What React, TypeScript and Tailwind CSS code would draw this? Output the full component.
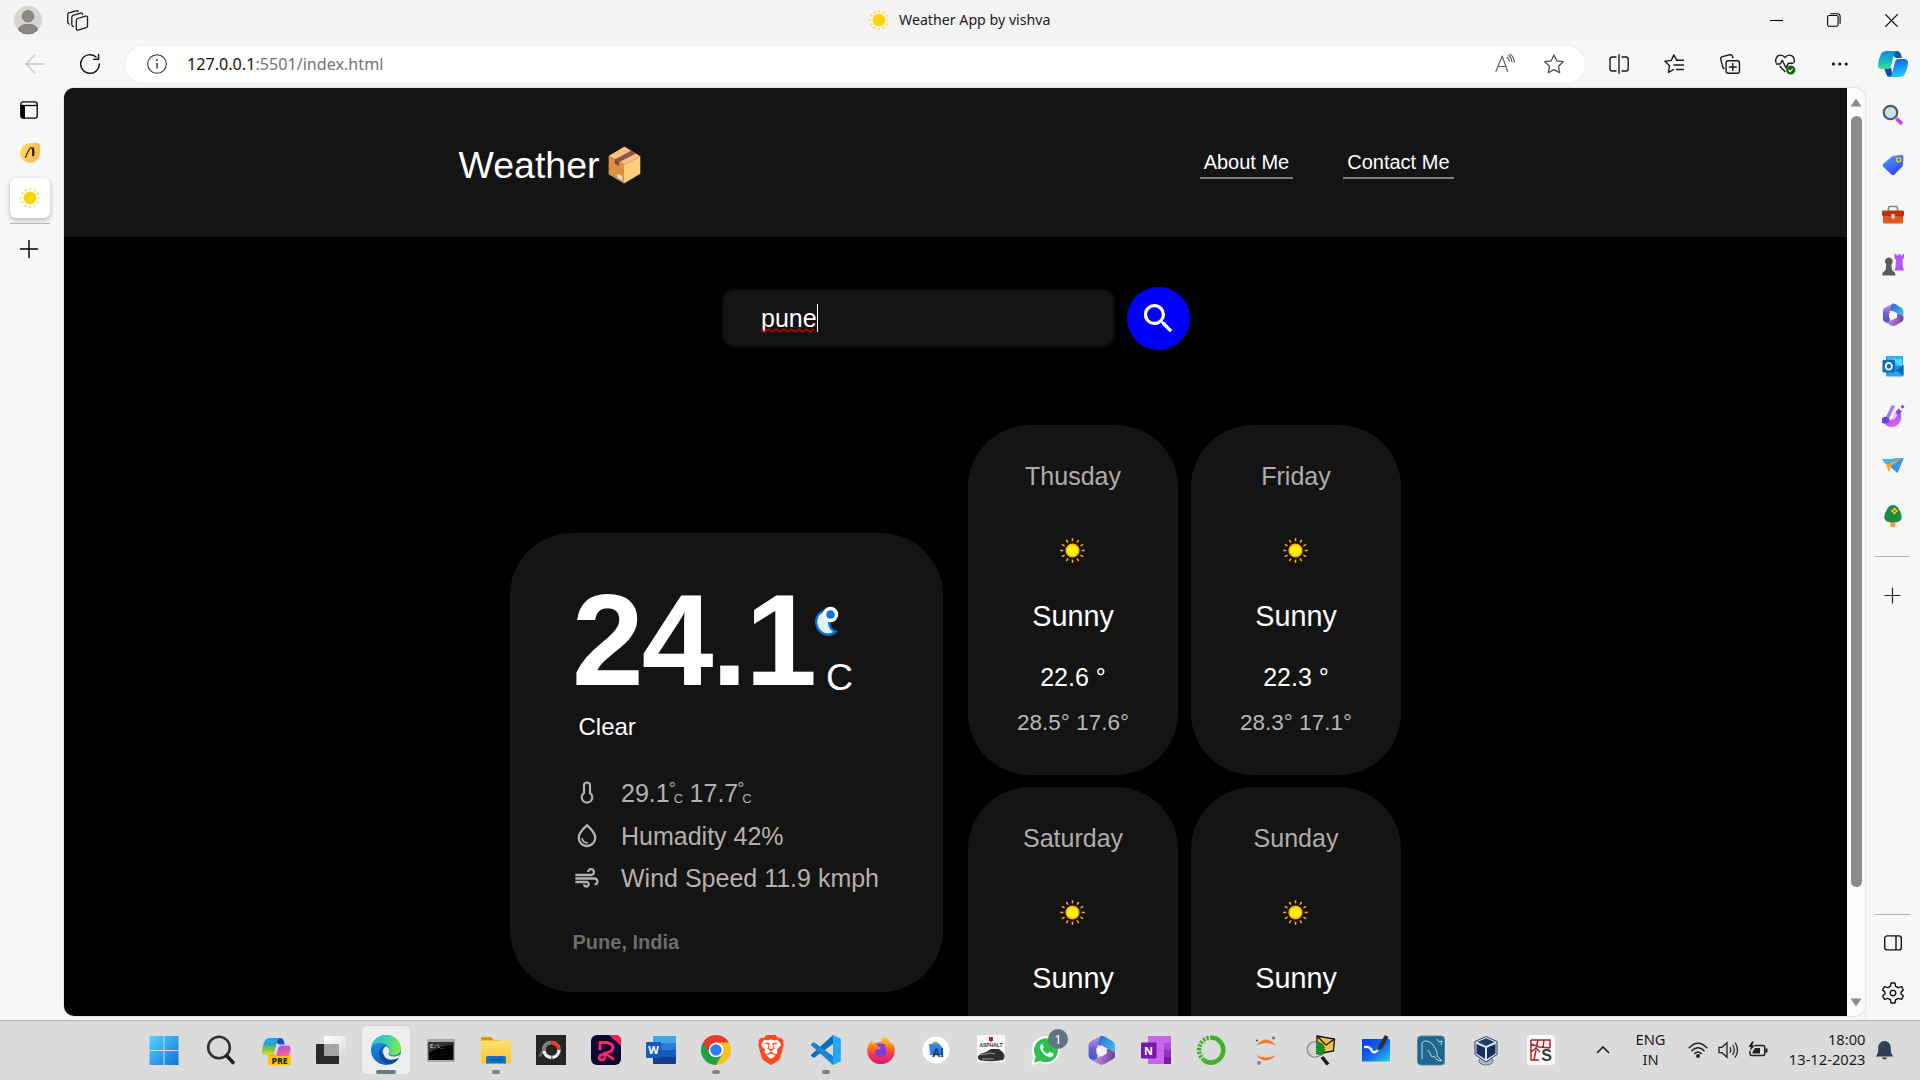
import React from "react";
import { FaFirefoxBrowser } from "react-icons/fa6";
import { MdSearch, MdAir, MdOutlineWaterDrop } from "react-icons/md";
import { SiBrave } from "react-icons/si";

type P = { children: React.ReactNode; s?: number; vb?: string; c?: string };
const Svg = ({ children, s = 30, vb = "0 0 30 30", c = "" }: P) => (
  <svg width={s} height={s} viewBox={vb} fill="none" className={"block shrink-0 overflow-visible " + c}>
    {children}
  </svg>
);
const Grad = ({ id, stops, x2 = 1, y2 = 1 }: { id: string; stops: string[]; x2?: number; y2?: number }) => (
  <linearGradient id={id} x1="0" y1="0" x2={x2} y2={y2}>
    {stops.map((c, i) => (
      <stop key={i} offset={i / (stops.length - 1)} stopColor={c} />
    ))}
  </linearGradient>
);

const Line = ({ d, s = 20, w = 1.3, color = "#1a1a1a" }: { d: string; s?: number; w?: number; color?: string }) => (
  <Svg s={s} vb="0 0 20 20">
    <path d={d} stroke={color} strokeWidth={w} strokeLinecap="round" strokeLinejoin="round" />
  </Svg>
);

/* ---------- small shared drawings ---------- */
const Favicon = () => (
  <Svg s={20} vb="0 0 20 20">
    <circle cx="10" cy="10" r="6.3" fill="#ffd500" />
    <circle cx="10" cy="10" r="8.9" stroke="#ffdf2b" strokeWidth="2" strokeDasharray="1.6 3.06" strokeDashoffset="0.8" />
  </Svg>
);

const Sun = () => (
  <Svg s={25} vb="0 0 24 24">
    <circle cx="12" cy="12" r="6" fill="#fff200" stroke="#fbad18" strokeWidth="1.6" />
    {Array.from({ length: 12 }, (_, i) => (
      <path key={i} d="M12 .2v3" stroke="#fbad18" strokeWidth="1.5" transform={`rotate(${i * 30} 12 12)`} />
    ))}
  </Svg>
);

const PackageBox = () => (
  <svg width="33" height="38" viewBox="0 0 33 38" className="block">
    <path d="M16.5.5 32.3 10.2 16 18.8.6 10z" fill="#f9c27c" />
    <path d="M.6 10 16 18.8V37.5L.6 28.3z" fill="#dd9040" />
    <path d="M16 18.8 32.3 10.2V27.7L16 37.5z" fill="#ffcc7a" />
    <path d="M23.3 4.6 28 7.5 11 16.3 6.8 13.5z" fill="#8d5543" />
    <path d="M6.8 13.5 11 16.3v3.6l-4.2-2z" fill="#7b4638" />
    <path d="m9.3 27.8 5 2.4v4l-5-2.6z" fill="#dfe3e6" />
  </svg>
);

const M365 = ({ s, id }: { s: number; id: string }) => (
  <Svg s={s}>
    <defs>
      <Grad id={id + "a"} stops={["#c791e6", "#6a5fd0", "#3a56c4"]} x2={0} />
      <Grad id={id + "b"} stops={["#2b67c9", "#4ac6f5"]} />
      <Grad id={id + "c"} stops={["#c99af0", "#6e3f93"]} x2={1} y2={0} />
    </defs>
    <path d="M14 1 4 6.5Q2.500 7.500 2.500 9.500V20Q2.500 22.500 4.500 23.500L11 27V10L19 5z" fill={`url(#${id}a)`} />
    <path d="M14 1q2-.8 4 .4l7.500 4.400Q28 7.500 28 10v8l-7 1v-6L11 9.500z" fill={`url(#${id}b)`} />
    <path d="M28 17v3.500q0 2-2 3l-8 4.600q-2.500 1.300-5 .2l-8-4.600q3 1 6-1.200L20 17l.5-4z" fill={`url(#${id}c)`} />
    <path d="m15 10 5 3v5l-5 3-5-3v-5z" fill="#f4f4f6" />
  </Svg>
);

const Copilot = ({ id, warm = false }: { id: string; warm?: boolean }) => (
  <Svg s={30}>
    <defs>
      <Grad id={id + "a"} stops={warm ? ["#1aa8f0", "#2a9fd0", "#7ac943", "#ffd21f"] : ["#1291d8", "#16b1c9", "#3fe08f"]} x2={0} />
      <Grad id={id + "b"} stops={warm ? ["#9a55f0", "#e356b5", "#ff8a5c"] : ["#2a56cf", "#1688ee", "#25c6ff"]} x2={0.3} />
    </defs>
    <path d="M8.500 2H19q3 0 4 3.500L24 9h-6z" fill={warm ? "#1b46c8" : "#145b9c"} />
    <path d="M6 19h7l2 9h-3q-3 0-4-3.500z" fill={warm ? "#f5a31d" : "#1643b8"} />
    <path d="M8.500 2H20q-3 0-4 3.500L13 17q-.8 3-3.500 3H3.500Q0 20-.1 16q.6-6 3.100-11Q4.700 2 8.500 2z" fill={`url(#${id}a)`} />
    <path d="M21.500 28H10q3 0 4-3.500L17 13q.8-3 3.500-3h6q3.500 0 3.600 4-.6 6-3.100 11-1.700 3-5.500 3z" fill={`url(#${id}b)`} />
  </Svg>
);

/* ---------- browser frame ---------- */
const TitleBar = () => (
  <div className="flex h-10 shrink-0 items-center bg-[#f3f3f3] pl-[14px]">
    <Svg s={28} vb="0 0 28 28">
      <circle cx="14" cy="14" r="14" fill="#d6d5d2" />
      <circle cx="14" cy="10.300" r="5.700" fill="#8b8886" stroke="#6f6c6a" strokeWidth=".8" />
      <path d="M4.500 24Q5 18.500 14 18.500T23.500 24Q19.500 28 14 28t-9.500-4z" fill="#8b8886" stroke="#6f6c6a" strokeWidth=".8" />
    </Svg>
    <div className="ml-[25px]">
      <Svg s={21} vb="0 0 21 21">
        <g stroke="#1c1c1c" strokeWidth="1.300" strokeLinejoin="round" strokeLinecap="round">
          <path d="m10.500 8.500 8-2.400q2-.4 2 1.500v8.400q0 1.300-1.300 1.700l-8 2.400q-1.900.4-1.900-1.500v-8.200q0-1.300 1.200-1.900z" />
          <path d="M6.500 16.500q-1.700-.3-1.700-2V7.200q0-1.400 1.300-1.900l7.500-2.200q1.800-.4 2 1.200" />
          <path d="M2.300 14Q.7 13.500.7 12V4.800q0-1.400 1.300-1.900L9.300.8q1.400-.3 1.900.7" />
        </g>
      </Svg>
    </div>
    <div className="ml-[781px] flex items-center gap-[10px]">
      <Favicon />
      <span className="whitespace-nowrap font-['Noto_Sans',sans-serif] text-[14.200px] leading-5 text-[#1b1b1b]">Weather App by vishva</span>
    </div>
    <div className="ml-auto flex items-center gap-[44px] pr-[22px]">
      <svg width="13" height="13" viewBox="0 0 13 13"><path d="M0 6.500h13" stroke="#000" strokeWidth="1.100" /></svg>
      <svg width="14" height="14" viewBox="0 0 14 14" fill="none" stroke="#000" strokeWidth="1.100">
        <rect x=".6" y="2.500" width="10.500" height="10.800" rx="1.500" />
        <path d="M3.300.8h7.200q2.600 0 2.600 2.500v7.500" />
      </svg>
      <svg width="13" height="13" viewBox="0 0 13 13"><path d="m.3.300 12.400 12.400M12.700.3.300 12.700" stroke="#000" strokeWidth="1.200" /></svg>
    </div>
  </div>
);

const Toolbar = () => (
  <div className="flex h-12 shrink-0 items-center bg-[#f7f7f7]">
    <div className="flex w-[125px] items-center gap-[35px] pl-[25px]">
      <Line d="M19.500 10H.8M9.500 1.500.8 10l8.700 8.500" color="#c6c6c6" />
      <Line d="M19.300 10a9.300 9.300 0 1 1-3.200-7M18.600.5v4.700h-4.800" w={1.5} />
    </div>
    <div className="flex h-[37px] w-[1460px] items-center rounded-full bg-white pl-[22px] pr-[21px] shadow-[0_0_3px_rgba(0,0,0,0.08)]">
      <Svg s={20} vb="0 0 20 20">
        <circle cx="10" cy="10" r="9.300" stroke="#333" strokeWidth="1.100" />
        <path d="M10 9v5.500" stroke="#333" strokeWidth="1.400" />
        <circle cx="10" cy="6" r="1" fill="#333" />
      </Svg>
      <span className="ml-[20px] whitespace-nowrap font-['Noto_Sans',sans-serif] text-[16.150px] leading-6 text-[#111]">
        127.0.0.1<span className="text-[#747474]">:5501/index.html</span>
      </span>
      <div className="ml-auto flex items-center gap-[29px]">
        <Line d="m.8 17.500 6.400-15.500 5.500 15.500M3 12.500h8M12 3.300q2.300 1.300 2.300 4M13.500 1.500q3.300 2 3.300 6.300M15.200.2q4 2.800 4 8" w={1.1} color="#5a5a5a" />
        <Line d="m10 .9 2.800 5.900 6.400.9-4.700 4.500 1.200 6.500L10 15.600l-5.700 3.100 1.200-6.500L.8 7.700l6.400-.9z" w={1.2} color="#4a4a4a" />
      </div>
    </div>
    <div className="ml-[24px] flex items-center gap-[35.300px]">
      <Line d="M7 3H3.200Q1 3 1 5.200v9.600Q1 17 3.200 17H7M13 3h4Q19.200 3 19.200 5.200v9.600Q19.200 17 17 17h-4M10 .8v18.400" w={1.4} />
      <Line d="M13.500 6 12.600 6.400 9.900.9 7.200 6.400.9 7.300l4.700 4.400-1.200 6.600 5-2.700M12.500 6.200h7M10 11h9.500M12.500 15.500h7" w={1.4} />
      <Line d="M8.300 6.800h9q2.200 0 2.200 2.200v8q0 2.200-2.200 2.200h-9q-2.200 0-2.200-2.200V9q0-2.200 2.200-2.200zM12.800 9.500v7M9.300 13h7M4 14.500q-1-.4-1.400-1.800L.8 5.300Q.4 3.300 2.300 2.600L9.800.8q2-.3 2.700 1.500l.4 1.500" w={1.4} />
      <Svg s={20} vb="0 0 20 20">
        <g stroke="#1c1c1c" strokeWidth="1.400" strokeLinecap="round" strokeLinejoin="round">
          <path d="M1 8.500Q-.3 4 3 1.800 7-.2 10 3.500q3-3.700 7-1.700 3.300 2.200 2 6.700M5 12.500l5 5" />
          <path d="M1.500 10h3.800l2-3.700 3.600 7.500 2.400-4.500h4.500" />
        </g>
        <circle cx="15.700" cy="16" r="4.600" fill="#0b6a0b" />
        <path d="m13.600 16 1.500 1.600 2.700-3" stroke="#fff" strokeWidth="1.100" />
      </Svg>
      <Svg s={20} vb="0 0 20 20">
        <g fill="#111"><circle cx="3.500" cy="10" r="1.600" /><circle cx="9.800" cy="10" r="1.600" /><circle cx="16.200" cy="10" r="1.600" /></g>
      </Svg>
    </div>
    <div className="ml-auto pr-[12px]"><Copilot id="cs" /></div>
  </div>
);

const TabStrip = () => (
  <div className="flex w-16 shrink-0 flex-col items-center bg-[#f7f7f7] pr-[4px] pt-[13px]">
    <Svg s={18} vb="0 0 18 18" c="mr-[2px]">
      <rect x=".8" y=".8" width="16.400" height="16.400" rx="2.500" stroke="#000" strokeWidth="1.300" />
      <path d="M1 4.500h16" stroke="#000" strokeWidth="1.300" />
      <path d="M1 4.500h4V17H3q-2 0-2-2z" fill="#000" />
    </Svg>
    <div className="mt-[24px]">
      <Svg s={20} vb="0 0 20 20">
        <defs><Grad id="ft" stops={["#fde063", "#fdb95a"]} y2={0.3} /></defs>
        <path d="M10 0h7q3 0 3 3v7A10 10 0 1 1 10 0z" fill="url(#ft)" />
        <path d="M5.500 14.500Q7 10 9.500 6q2-2.800 3 .500.500 3 0 6M13 4.500q1.500 3 .5 8.500" stroke="#2a2412" strokeWidth="1.200" strokeLinecap="round" />
      </Svg>
    </div>
    <div className="mt-[15px] flex size-10 items-center justify-center rounded-md bg-white shadow-[0_2px_5px_rgba(0,0,0,0.28)]"><Favicon /></div>
    <div className="mt-[5px] h-px w-10 bg-[#b5b5b5]" />
    <div className="mr-[2px] mt-[16px]"><Line s={18} d="M10 .5v19M.5 10h19" w={1.6} color="#000" /></div>
  </div>
);

const sideIcons: React.ReactNode[] = [
  <Svg key="s" s={22} vb="0 0 22 22">
    <path d="m14.500 14.500 5.500 5.500" stroke="#c63cf0" strokeWidth="3.600" />
    <circle cx="8.500" cy="8.500" r="6.700" fill="#c4e2f7" stroke="#5a5a5c" strokeWidth="2.300" />
  </Svg>,
  <Svg key="t" s={22} vb="0 0 22 22">
    <defs><Grad id="tg" stops={["#5ca2ff", "#2f49f2"]} x2={0.4} /></defs>
    <path d="M10.500 2 19.500.8q2 0 2 2L20.800 12l-8.300 8.500q-1.600 1.200-3 0L1.200 12.800q-1.200-1.500 0-3z" fill="url(#tg)" />
    <circle cx="16.700" cy="5.800" r="2" fill="#6d6a10" stroke="#ffdd12" strokeWidth="1.300" />
  </Svg>,
  <Svg key="b" s={22} vb="0 0 22 22">
    <path d="M6.500 7V4q0-1.500 1.500-1.500h6q1.500 0 1.500 1.500v3" stroke="#8a8a8a" strokeWidth="1.700" />
    <rect x="1" y="9" width="20" height="10.500" rx="1.500" fill="#e2571c" />
    <rect x="0" y="6.500" width="22" height="5.500" rx="1.200" fill="#b93306" />
    <rect x="9.300" y="10" width="3.600" height="4.500" rx="1" fill="#d8d2cc" />
  </Svg>,
  <Svg key="c" s={22} vb="0 0 22 22">
    <path d="M12.500 0h2v1.500h2V0h2v1.500h2V0H22v4l-1.500 2 .5 8 1.500 2.500H12l1.500-2.500.5-8-1.500-2z" fill="#b455f5" />
    <path d="M6.800 3.500a4 4 0 0 1 2.600 7l.6 5.500 3.200 3v2.500H.4V19l3.200-3 .6-5.500a4 4 0 0 1 2.600-7z" fill="#5c5a5c" />
  </Svg>,
  <M365 key="m" s={24} id="ms" />,
  <Svg key="o" s={22} vb="0 0 22 22">
    <rect x="4" y="1" width="17" height="19" rx="1.300" fill="#1490df" />
    <path d="M5 1h15.500v10H5z" fill="#36b5f2" /><path d="M12 4h8v7l-7-3z" fill="#50d9ff" />
    <path d="M21.500 10v10.500q0 1-1 1H5q-1 0-1-1V19z" fill="#28a8ea" /><path d="m21.500 10-8 5.500 8 5z" fill="#1066b5" />
    <rect x=".5" y="5" width="12.500" height="12.500" rx="1.200" fill="#0f6cbd" />
    <ellipse cx="6.800" cy="11.200" rx="3.100" ry="3.400" stroke="#fff" strokeWidth="1.800" />
  </Svg>,
  <Svg key="d" s={24} vb="0 0 24 24">
    <defs><Grad id="dg" stops={["#8b58e8", "#e05cf4"]} x2={0.4} /></defs>
    <path d="M3 15q4 3 8 .5Q14 13 15 8l5 2q1.500 7-4 11.500-4.500 2.700-9.500.7Q3 20 3 15z" fill="url(#dg)" />
    <path d="M12.500 8q4.500 1 3 4.500-1.300 2.700-4.500 3z" fill="#f0c8fb" />
    <path d="m11 1 3 1-6 13-3.500-1.500z" fill="#a678f5" />
    <path d="M1 14.500q2-3 5.500-1.200 3.500 2.500 1 5Q4.500 20.500 1 19z" fill="#5b4ad6" />
    <path d="m17.500 4.500 3.500 3-3 3.500-3.500-3zM21.500.8 23.500 2.800l-2 2-2-2z" fill="#7a4be6" />
  </Svg>,
  <Svg key="p" s={22} vb="0 0 22 22">
    <path d="M0 4.500 21.500 3l-6 15z" fill="#1f8ae6" /><path d="M0 4.500 21.500 3 4 9.500z" fill="#42b5f5" />
    <path d="M4 9.500 21.500 3 9 11l-2 6.500z" fill="#f5a81c" /><path d="M21.500 3 9 11.500 15.500 18z" fill="#3399f0" />
  </Svg>,
  <Svg key="r" s={22} vb="0 0 22 22">
    <rect x="8.300" y="15" width="5" height="7" rx="1" fill="#f0a030" />
    <path d="M11 0q4 0 6 4.500 3.500 5 2.500 9-1 4-8.500 4t-8.500-4q-1-4 2.500-9Q7 0 11 0z" fill="#1f8a44" />
    <path d="M12.500 4v4M10.500 6h4" stroke="#ffd21e" strokeWidth="2.600" strokeLinecap="round" /><circle cx="12.500" cy="6" r="1.200" fill="#e8481c" />
  </Svg>,
];

const SideBar = () => (
  <div className="flex w-[55px] shrink-0 flex-col items-center border-l border-[#e9e9e9] bg-[#f7f7f7] pb-[16px] pr-[1px]">
    <div className="h-[2px]" />
    {sideIcons.map((ic, i) => (
      <div key={i} className="flex h-[50.100px] w-10 items-center justify-center">{ic}</div>
    ))}
    <div className="mt-[15px] h-px w-[35px] bg-[#b3b3b3]" />
    <div className="mt-[31px]"><Line s={15} d="M10 0v20M0 10h20" w={1.6} color="#222" /></div>
    <div className="mt-auto h-px w-[35px] bg-[#b3b3b3]" />
    <div className="mt-[20px]">
      <svg width="18" height="16" viewBox="0 0 18 16" fill="none" stroke="#111" strokeWidth="1.400" className="block">
        <rect x=".7" y=".9" width="16.600" height="14" rx="2.500" /><path d="M12 1v14" />
      </svg>
    </div>
    <div className="mt-[31px]">
      <Svg s={22} vb="-11 -11 22 22">
        <path d="M-1.900-10H1.900L2.700-6.700 5.200-5.300 8.500-6.300 10.400-3 8-.900V.9L10.400 3 8.500 6.300 5.200 5.300 2.700 6.700 1.900 10H-1.900L-2.700 6.700-5.200 5.300-8.500 6.300-10.400 3-8 .9V-.9L-10.400-3-8.500-6.300-5.200-5.300-2.700-6.700z" stroke="#111" strokeWidth="1.400" strokeLinejoin="round" />
        <circle r="2.800" stroke="#111" strokeWidth="1.400" />
      </Svg>
    </div>
  </div>
);

const ScrollBar = () => (
  <div className="flex w-[18px] shrink-0 flex-col items-center bg-[#fcfcfc] pb-[9px] pt-[10px]">
    <svg width="12" height="9" viewBox="0 0 12 9" className="block"><path d="M6 .5 11.500 8.500H.5z" fill="#8b8b8b" /></svg>
    <div className="mt-[9px] h-[771px] w-[11px] rounded-full bg-[#8b8b8b]" />
    <svg width="12" height="9" viewBox="0 0 12 9" className="mt-auto block"><path d="M6 8.500 11.500.5H.5z" fill="#8b8b8b" /></svg>
  </div>
);

/* ---------- weather page ---------- */
const Row = ({ icon, children }: { icon: React.ReactNode; children: React.ReactNode }) => (
  <div className="flex h-[42.500px] items-center text-[25px] text-[#b4b0ae]">
    <div className="flex w-[28px] justify-center">{icon}</div>
    <div className="ml-[20px] flex whitespace-nowrap leading-[42.500px]">{children}</div>
  </div>
);

const MiniUnit = () => (
  <span className="-ml-[1px] flex h-[42px] w-[14px]">
    <span className="mt-[1px] w-[5px] text-[17.500px] leading-[32px]">°</span>
    <span className="mt-[20px] text-[13px] leading-[14px]">C</span>
  </span>
);

const Current = () => (
  <div className="mt-[108px] h-[459px] w-[433px] shrink-0 rounded-[62px] bg-[#141414] pl-[61px] pt-[46px]">
    <div className="flex h-[125px]">
      <span className="-mt-[1px] ml-[1px] w-[243px] text-[129px] font-bold leading-[125px] tracking-[-2px] text-white">24.1</span>
      <div className="flex flex-col">
        <svg width="25" height="30" viewBox="0 0 25 30" fill="none" className="mt-[27px] block">
          <path d="M9.500 4.500Q.5 8 1.200 17.500 3.500 28 13 28.700q4.500 0 7.500-3-7.500-3-6-12z" fill="#dff3ff" stroke="#0b6fdc" strokeWidth="2.400" />
          <circle cx="15.500" cy="8.500" r="6" fill="#0b6fdc" stroke="#fff" strokeWidth="3.500" />
        </svg>
        <span className="ml-[11px] mt-[20px] text-[37.500px] leading-[42px] text-white">C</span>
      </div>
    </div>
    <div className="ml-[7.500px] mt-[8px] text-[24px] leading-[30px] text-white">Clear</div>
    <div className="mt-[30px] flex flex-col pl-[2px]">
      <Row icon={<Svg s={24} vb="0 0 24 24"><path d="M9 12V4.500a3 3 0 0 1 6 0V12a5.300 5.300 0 1 1-6 0z" stroke="#b4b0ae" strokeWidth="2.200" /></Svg>}>
        29.1<MiniUnit />&nbsp;17.7<MiniUnit />
      </Row>
      <Row icon={<MdOutlineWaterDrop size={31} />}>Humadity 42%</Row>
      <Row icon={<MdAir size={31} />}>Wind Speed 11.9 kmph</Row>
    </div>
    <div className="ml-[1.500px] mt-[29px] text-[20px] font-bold leading-[26px] text-[#6d6d6d]">Pune, India</div>
  </div>
);

const days: { name: string; temp?: string; range?: string }[] = [
  { name: "Thusday", temp: "22.6 °", range: "28.5° 17.6°" },
  { name: "Friday", temp: "22.3 °", range: "28.3° 17.1°" },
  { name: "Saturday" },
  { name: "Sunday" },
];

const Day = ({ d }: { d: (typeof days)[number] }) => (
  <div className="flex h-[350px] flex-col items-center whitespace-nowrap rounded-[62px] bg-[#141414] pt-[36px]">
    <div className="text-[25px] leading-[30px] text-[#b0acab]">{d.name}</div>
    <div className="mt-[47px] pr-[1px]"><Sun /></div>
    <div className="mt-[36px] text-[28.750px] leading-[34px] text-white">Sunny</div>
    {d.temp && <div className="mt-[29px] text-[25px] leading-[30px] text-white">{d.temp}</div>}
    {d.range && <div className="mt-[16.500px] text-[22.500px] leading-[27px] text-[#b8b8b8]">{d.range}</div>}
  </div>
);

const WeatherPage = () => (
  <div className="min-w-0 flex-1 overflow-hidden bg-black font-['Liberation_Sans',Arial,sans-serif]">
    <header className="flex h-[149px] justify-center bg-[#141414]">
      <div className="flex w-[996px] items-start justify-between">
        <div className="flex items-center gap-[8px] pl-[1px] pt-[55px]">
          <span className="text-[37.500px] leading-[44px] text-white">Weather</span>
          <PackageBox />
        </div>
        <nav className="flex gap-[50px] pt-[61px] text-[20px] leading-[27px] text-white">
          <span className="border-b-2 border-[#7d7d7d] px-[4px] pb-[1px]">About Me</span>
          <span className="border-b-2 border-[#7d7d7d] px-[4px] pb-[1px]">Contact Me</span>
        </nav>
      </div>
    </header>
    <div className="mt-[50px] flex h-[63px] items-start justify-center gap-[12px]">
      <div className="mt-[2px] flex h-[58px] w-[393px] items-center rounded-xl border-2 border-[#0c0c14] bg-[#141414] pl-[37.500px]">
        <div className="relative border-r border-white text-[25px] leading-[28px] text-white">
          pune
          <svg width="54" height="5" viewBox="0 0 54 5" fill="none" className="absolute left-[0px] top-[24px]">
            <path d={"M0 1" + Array.from({ length: 7 }, () => "l3.800 3 3.800-3").join("")} stroke="#e00000" strokeWidth="1.300" />
          </svg>
        </div>
      </div>
      <div className="flex size-[63px] items-center justify-center rounded-full bg-[#0000ff] text-white"><MdSearch size={39} /></div>
    </div>
    <div className="mt-[75px] flex justify-center gap-[25px]">
      <Current />
      <div className="grid w-[433px] grid-cols-[210px_210px] content-start gap-x-[13px] gap-y-[12.400px]">
        {days.map((d) => <Day key={d.name} d={d} />)}
      </div>
    </div>
  </div>
);

/* ---------- taskbar ---------- */
const apps: { icon: React.ReactNode; run?: boolean; active?: boolean; badge?: boolean }[] = [
  { icon: <Svg><defs><Grad id="wg" stops={["#57d3fd", "#0a74d6"]} /></defs><path d="M.5 1h14v14H.5zM15.500 1h14v14h-14zM.5 16h14v14H.5zM15.500 16h14v14h-14z" fill="url(#wg)" /></Svg> },
  { icon: <Svg><circle cx="13" cy="12.500" r="10.800" stroke="#333" strokeWidth="2.600" /><path d="m20.500 20.500 6.500 7" stroke="#222" strokeWidth="3.600" strokeLinecap="round" /></Svg> },
  { icon: <Svg><g transform="translate(1 1) scale(.95)"><Copilot id="ct" warm /></g><rect x="7" y="21" width="23" height="9.500" rx="2" fill="#ffc700" /><text x="18.500" y="29" textAnchor="middle" fontSize="8.800" fontWeight="800" fill="#222" fontFamily="Noto Sans">PRE</text></Svg> },
  { icon: <Svg><defs><Grad id="tv" stops={["#ffffff", "#dadada"]} /></defs><rect x="0" y="9" width="23" height="20" rx="1" fill="#2b2b2b" /><rect x="8" y="1" width="22" height="20" rx="1" fill="url(#tv)" /><path d="M8 9h15v12H8z" fill="#a5a5a5" /></Svg> },
  { active: true, icon: <Svg><defs><Grad id="eg" stops={["#2bb6e6", "#39d2b0", "#76e850"]} y2={0.2} /><Grad id="eg2" stops={["#1a9be8", "#0f62c4"]} x2={0.3} /></defs>
    <circle cx="15" cy="15" r="15" fill="url(#eg2)" />
    <path d="M.2 13A15 15 0 0 1 30 13.500q0 5-5 6.700-5 1-7.300-1 2-2.500.8-5.700Q16.500 8.500 10 8 2.500 8 .2 13z" fill="url(#eg)" />
    <path d="M10.500 17Q11 12 15 10.500q-7 .5-7 8.500 1.500 9.500 11 10.500 6-1.500 9-6.800-5 2.300-10 .8-6-2-7.500-6.500z" fill="#0c4f9e" />
    <path d="M12.300 18.500q-1.500-5 3-7.300 3.500 1.800 3.200 5.300-.3 1.500-1.300 2.500 1.500 3.300 7.800 2.300l4-1.500-1 3q-10 4-14-.5z" fill="#ececec" />
  </Svg> },
  { icon: <Svg><rect x="1" y="4" width="28" height="23" rx="1" fill="#a5a9b0" /><rect x="2.500" y="7" width="25" height="18" fill="#050505" /><path d="M2.500 7h25v3Q15 10 2.500 18z" fill="#333" /><text x="4" y="13" fontSize="5.500" fontWeight="700" fill="#ddd" fontFamily="Liberation Mono">C:\_</text></Svg> },
  { run: true, icon: <Svg><defs><Grad id="fe" stops={["#ffdf70", "#ffc329"]} x2={0} /></defs><path d="M0 3q0-1 1-1h9l3 3h5v6H0z" fill="#dc9500" /><rect x="0" y="5.500" width="30" height="23" rx="1" fill="url(#fe)" /><path d="M5 28.500V23q0-2 2-2h16q2 0 2 2v5.500z" fill="#1271c4" /><path d="M9 24.700h13" stroke="#0a4b92" strokeWidth="1.300" /></Svg> },
  { icon: <Svg><path d="M0 0h30v30H0z" fill="#252525" /><path d="M12.500 7.500a8 8 0 0 0-5 7.500l-4 6.500" stroke="#5f5f5f" strokeWidth="3" /><circle cx="15.500" cy="15" r="7.500" stroke="#f4f4f4" strokeWidth="3.400" strokeDasharray="10.800 .98" /><path d="M15.500 7.500a7.500 7.500 0 0 1 7.500 7" stroke="#f03224" strokeWidth="3.400" /><path d="M8 15a7.500 7.500 0 0 1 7-7.500" stroke="#7a7a7a" strokeWidth="3.400" /></Svg> },
  { icon: <Svg><rect width="30" height="30" rx="6" fill="#0c0433" /><path d="M18 0h7q5 0 5 5v6z" fill="#f6204f" /><path d="M9 14V7.500h6q7 1 7 5 0 3-4 4.500L9 20.500q-2 4.500 2 4.500 4 0 3-7l8 6" stroke="#ff2568" strokeWidth="2.800" strokeLinejoin="round" strokeLinecap="round" /></Svg> },
  { icon: <Svg><path d="M8 1h21q1 0 1 1v6.500H7V2q0-1 1-1z" fill="#41a5ee" /><path d="M7 8h23v7H7z" fill="#2b7cd3" /><path d="M7 15h23v7H7z" fill="#185abd" /><path d="M7 22h23v6q0 1-1 1H8q-1 0-1-1z" fill="#103f91" /><rect x="0" y="7" width="15" height="16" rx="1" fill="#185abd" /><text x="7.500" y="19" textAnchor="middle" fontSize="11" fontWeight="700" fill="#fff" fontFamily="Open Sans">W</text></Svg> },
  { run: true, icon: <Svg><circle cx="15" cy="15" r="15" fill="#fcc21b" /><path d="M15 15 2 7.500A15 15 0 0 0 15 30l6.500-11.300z" fill="#1fa34a" /><path d="M28 7.500A15 15 0 0 0 2 7.500L8.500 18.700 15 7.500z" fill="#e33b2e" /><circle cx="15" cy="15" r="7.300" fill="#fff" /><circle cx="15" cy="15" r="5.700" fill="#2d7df0" /></Svg> },
  { icon: <Svg><path d="m8 3 14 0 5 6-4 15-8 6-8-6L3 9z" fill="#fff" /><SiBrave x={0} y={0} size={30} color="#fb4b1c" /></Svg> },
  { run: true, icon: <Svg><path d="M22 0v9L3.500 22.500q-1 .7-1.800 0L.3 21q-.7-.8 0-1.600z" fill="#0a6fb8" /><path d="M22 30v-9L3.500 7.500q-1-.7-1.800 0L.3 9q-.7.8 0 1.600z" fill="#1789d0" /><path d="m22 0 7 3.200q.8.500.8 1.300v21q0 .8-.8 1.300L22 30q-1 0-1.500-1 1.500.5 1.500-1V2q0-1.500-1.500-1 .5-1 1.500-1z" fill="#27a7f3" /></Svg> },
  { icon: <Svg><defs><Grad id="ff" stops={["#ffd93b", "#ff8a16", "#f8304e", "#d21c8e"]} x2={0} /></defs><circle cx="15" cy="16" r="9" fill="#7a3fe0" /><FaFirefoxBrowser size={29} x={0.500} y={0.500} fill="url(#ff)" /></Svg> },
  { icon: <Svg><circle cx="15" cy="15" r="13.500" fill="#fff" /><path d="M8 9h10l3 3v8H9z" fill="#3a7df0" /><path d="M10 9.500q4-5.500 9 0z" fill="#33c36b" /><text x="17" y="22" textAnchor="middle" fontSize="12" fontWeight="700" fill="#123c5c" fontFamily="Roboto">AI</text></Svg> },
  { icon: <Svg><path d="M1 0h28v27H1z" fill="#f8f8f8" /><path d="M13 2h4v3.500l-2 1.500-2-1.500z" fill="#a32b3c" /><text x="15" y="12" textAnchor="middle" fontSize="5" fontWeight="700" textLength="23" fill="#333" fontFamily="Liberation Sans">ASPHALT</text><path d="M2 21q3-3 8-4l5-3h8l4 3.500q2 2 1.500 5L27 25q-10 2-22 .5-4-1.500-3-4.500z" fill="#2e2e30" /><path d="m5 20 9-2 5 1M6 24h12" stroke="#9a9a9a" /></Svg> },
  { badge: true, icon: <Svg><path d="M0 30 2.500 22A14 14 0 1 1 9 28z" fill="#fff" /><path d="M3 27.500 4.700 21.500A12 12 0 1 1 9.500 26z" fill="#2fc04e" /><path d="M11 8.500q-4 3 .5 9 6 7 10.500 3.500l.7-2.300-4-2-2 2q-4-1-5-5l1.300-1.500z" fill="#fff" /></Svg> },
  { icon: <M365 s={31} id="mt" /> },
  { icon: <Svg><path d="M7 1h22q1 0 1 1v27H7z" fill="#ca64ea" /><path d="M23 8h7v7h-7z" fill="#ae4bd5" /><path d="M23 15h7v7h-7z" fill="#9332bf" /><path d="M23 22h7v7h-7z" fill="#7719aa" /><rect x="0" y="7.500" width="15.500" height="16" rx="1" fill="#7719aa" /><text x="7.500" y="19.500" textAnchor="middle" fontSize="11" fontWeight="700" fill="#fff" fontFamily="Open Sans">N</text></Svg> },
  { icon: <Svg><path d="M15 2.500a12.500 12.500 0 1 1-7 23" stroke="#43b02a" strokeWidth="4.600" /><path d="M8 25A12.500 12.500 0 0 1 15 2.500" stroke="#43b02a" strokeWidth="4.400" strokeDasharray="2.400 1.300" /></Svg> },
  { icon: <Svg><path d="M5 10.500q10-12 20 0-10-5-20 0zM5 20q10 11 20 0-10 5-20 0z" fill="#f37726" /><circle cx="22.500" cy="3" r="1.600" fill="#767677" /><circle cx="6" cy="5.500" r="1.100" fill="#555" /><circle cx="8" cy="28" r="2" fill="#8a8a8b" /></Svg> },
  { icon: <Svg><path d="m11 1 17.500 3-1 12L11 19z" fill="#f0bf52" stroke="#111" strokeWidth="1.300" /><path d="m11 1 9 9 8.500-6" stroke="#111" strokeWidth="1.300" /><circle cx="9" cy="14.500" r="7.800" fill="#d4d5d2" stroke="#8c8c8c" strokeWidth="1.300" /><path d="M10.500 7q8 0 8 8 0 4-3 5l-5-1z" fill="#12961c" stroke="#041" strokeDasharray="1 1" /><path d="m16 22 6 7.500" stroke="#1a1a1a" strokeWidth="3.600" /></Svg> },
  { icon: <Svg><defs><Grad id="wb" stops={["#0b32f5", "#0f63ea", "#24cfe0"]} /></defs><rect x="1" y="4" width="28" height="22.500" rx="1" fill="url(#wb)" /><path d="M4 12q5-1 7 4 2 3 6-1" stroke="#fff" strokeWidth="2.300" strokeLinecap="round" /><path d="m16 16 2-6 6-10 3.500 2-6 11z" fill="#2e2e33" /></Svg> },
  { icon: <Svg><rect x="1.500" y="1" width="27" height="29" rx="3.500" fill="#20678f" stroke="#4c8aa9" /><path d="M6 24V11q-1-5 4-5 6 0 10 9 2 4 1 6l5 5-5-1-3-4-2 1-4-7M21 4l2 3 3-1-1 4" stroke="#b9d9e8" strokeWidth="1" strokeLinejoin="round" /></Svg> },
  { icon: <Svg><ellipse cx="15" cy="26" rx="7" ry="4" fill="#aeb5c3" stroke="#5f6e88" /><path d="M15 1.500 26 6.500v13L15 27 4 19.500v-13z" fill="#d9e3ee" stroke="#24406a" /><path d="m15 3.200 8.500 3.900-8.500 3.800-8.500-3.800z" fill="#1e3b68" /><path d="M5.500 9 14 12.800V24l-8.500-5.500zM24.500 9 16 12.800V24l8.500-5.500z" fill="#16305a" /></Svg> },
  { icon: <Svg><rect x="1" y="0" width="28" height="30" rx="4" fill="#fbfafa" /><path d="M5 5h19v8M5 5v20h8M12 5l-2 8-5 4M5 9l8 3 11 1M10 13l4 4M10 15 8 25M18 5l-1 8" stroke="#a8232a" strokeWidth="1.500" /><text x="20.500" y="26" textAnchor="middle" fontSize="16" fontWeight="700" fill="#3a3a3a" fontFamily="Liberation Sans">S</text></Svg> },
];

const TaskBar = () => (
  <div className="flex h-[60px] shrink-0 items-center border-t border-[#b2b2b3] bg-[#dbdbdc] pb-[1px] pl-[136.500px] font-['Noto_Sans',sans-serif] text-[14.700px] leading-[20px] text-[#1b1b1b]">
    <div className="flex">
      {apps.map((a, i) => (
        <div key={i} className={"flex w-[55px] justify-center " + (i === 0 ? "mr-[2px]" : "")}>
          <div className={"relative flex size-12 items-center justify-center rounded " + (a.active ? "bg-[#ededed] shadow-[0_0_1px_rgba(0,0,0,0.25)]" : "")}>
            {a.icon}
            {a.active && <div className="absolute bottom-0 h-1 w-5 rounded-full bg-[#647b8a]" />}
            {a.run && <div className="absolute bottom-0 h-1 w-2 rounded-full bg-[#828282]" />}
            {a.badge && <div className="absolute right-[2px] top-[3px] flex size-[20px] items-center justify-center rounded-full bg-[#5f7481] text-[13px] text-white">1</div>}
          </div>
        </div>
      ))}
    </div>
    <div className="ml-[27px] flex items-center">
      <svg width="14" height="8" viewBox="0 0 14 8" fill="none"><path d="m1 7 6-6 6 6" stroke="#1b1b1b" strokeWidth="1.600" /></svg>
      <div className="-mt-[2px] ml-[26px] w-[30px] text-center">ENG<br />IN</div>
      <svg width="20" height="16" viewBox="0 0 20 16" fill="none" stroke="#222" strokeWidth="1.400" className="ml-[22px]">
        <path d="M.7 6.300q9.300-10 18.600 0M3.500 9.200q6.500-7 13 0M6.300 12q3.700-4 7.400 0" /><circle cx="10" cy="14" r="1.200" fill="#222" />
      </svg>
      <svg width="21" height="18" viewBox="0 0 21 18" fill="none" stroke="#222" strokeWidth="1.300" className="ml-[10px]">
        <path d="M1 6.300h3L9 1.800v14.400l-5-4.500H1zM12 6.300q1.500 2.700 0 5.400M14.700 4q3 5 0 10M17 1.500q5 7.500 0 15" />
      </svg>
      <svg width="20" height="18" viewBox="0 0 20 18" fill="none" className="ml-[9px]">
        <path d="M6.500 4.500h8.300q2 0 2 2v6q0 2-2 2H4q-2 0-2-2V10" stroke="#222" strokeWidth="1.500" /><path d="M7 7h5v5.500H4.500V11z" fill="#222" /><path d="M17.300 7.500h2.200v4h-2.200z" fill="#222" /><path d="M4 .5.500 6h2.300l-1 4L7 4.500H4.200L6 .5z" fill="#222" />
      </svg>
      <div className="-mt-[3px] ml-[17px] w-[81px] text-right">18:00<br />13-12-2023</div>
      <svg width="17" height="19" viewBox="0 0 17 19" className="ml-[10px]"><path d="M8.500 0q5.800.5 6.300 6.500V11L17 15.500H0L2.200 11V6.500Q2.700.5 8.500 0zM5.500 16.500h6q-3 4-6 0z" fill="#2f4050" /></svg>
    </div>
  </div>
);

export default function App() {
  return (
    <div className="flex h-[1080px] w-[1920px] flex-col overflow-hidden bg-[#f7f7f7]">
      <TitleBar />
      <Toolbar />
      <div className="flex h-[932px] shrink-0">
        <TabStrip />
        <div className="flex h-[928px] w-[1801px] shrink-0 overflow-hidden rounded-[10px] shadow-[0_0_2px_rgba(0,0,0,0.3)]">
          <WeatherPage />
          <ScrollBar />
        </div>
        <SideBar />
      </div>
      <TaskBar />
    </div>
  );
}
